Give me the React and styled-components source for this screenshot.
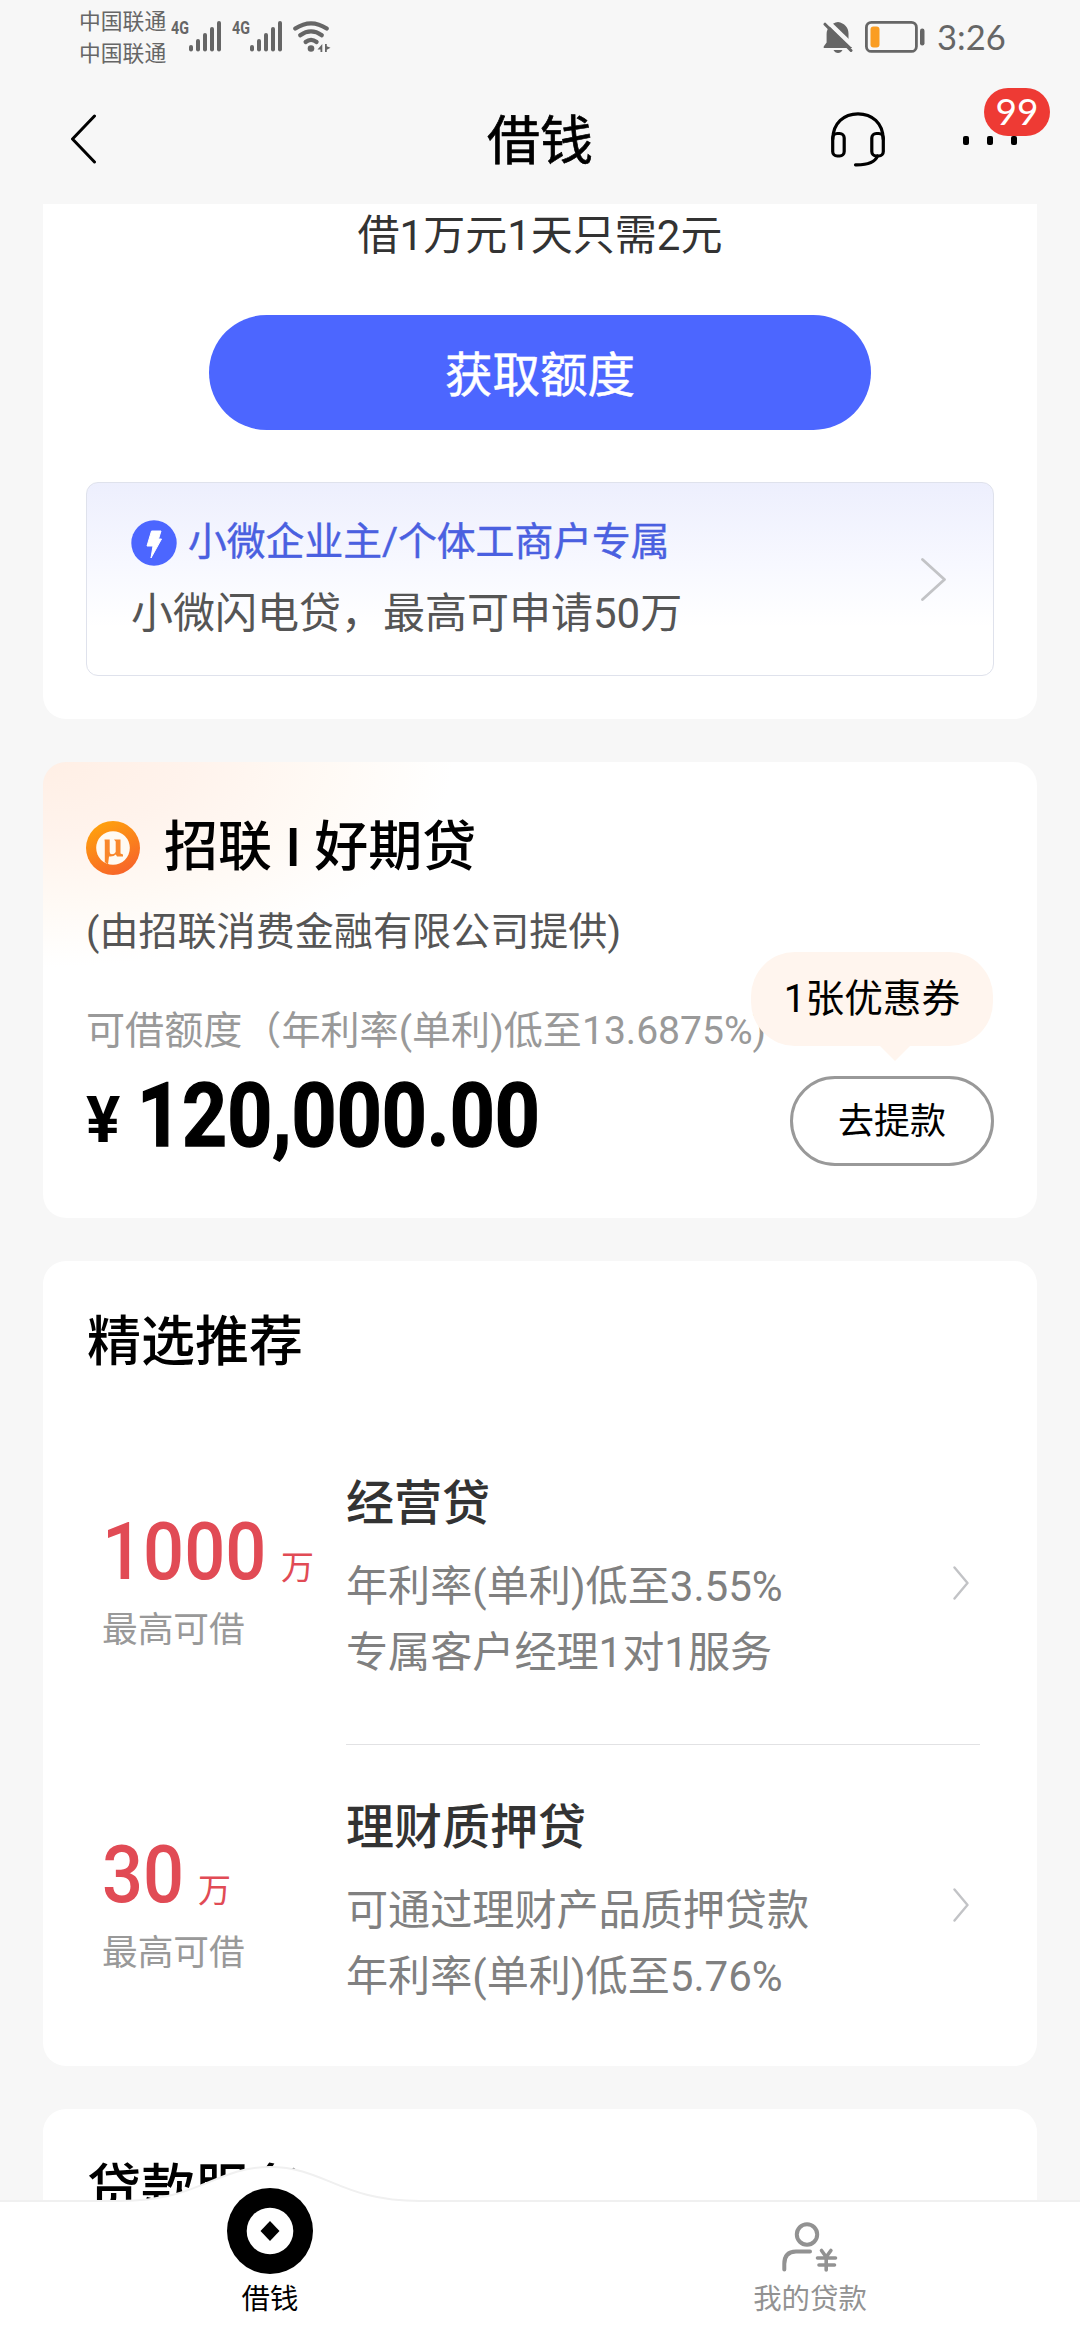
import React from 'react';
import styled, { createGlobalStyle } from 'styled-components';

const GlobalStyle = createGlobalStyle`
  * { box-sizing: border-box; }
  body {
    margin: 0;
    background: #f7f7f7;
    font-family: Roboto, "Noto Sans CJK SC", sans-serif;
    color: #000;
  }
  svg { display: block; flex: none; }
`;

const Screen = styled.div`
  width: 1080px;
  height: 2340px;
  display: flex;
  flex-direction: column;
  overflow: hidden;
  background: #f7f7f7;
`;

/* ---------- status bar ---------- */
const StatusBar = styled.header`
  height: 74px;
  padding: 6px 77px 0 79px;
  display: flex;
  justify-content: space-between;
  align-items: flex-start;
  color: #666;
`;
const StatusGroup = styled.div`
  display: flex;
  align-items: flex-start;
`;
const Carriers = styled.div`
  width: 92px;
  font-size: 21.8px;
  line-height: 32px;
  white-space: nowrap;
`;
const Signal = styled.div`
  display: flex;
  width: 61px;
  padding-top: 15px;
`;
const NetType = styled.span`
  width: 18px;
  font-size: 19px;
  font-weight: 700;
  line-height: 14px;
  display: inline-block;
  transform: scaleX(0.75);
  transform-origin: left;
`;
const WifiSlot = styled.div`
  padding-top: 14px;
`;
const RightIcons = styled.div`
  display: flex;
  align-items: center;
  padding-top: 13px;
  gap: 12px;
`;
const Clock = styled.span`
  width: 66px;
  font-family: Lato, Roboto, sans-serif;
  font-size: 34.5px;
  line-height: 36px;
  white-space: nowrap;
`;

/* ---------- navigation ---------- */
const NavBar = styled.nav`
  height: 130px;
  padding: 0 63px 0 70px;
  display: grid;
  grid-template-columns: 1fr auto 1fr;
  align-items: center;
`;
const NavTitle = styled.h1`
  margin: 0 7px 0 0;
  padding-top: 5px;
  font-size: 53px;
  line-height: 70px;
  font-weight: 400;
  -webkit-text-stroke: 0.7px currentColor;
`;
const NavActions = styled.div`
  display: flex;
  justify-content: flex-end;
  align-items: center;
  gap: 78px;
`;
const More = styled.div`
  position: relative;
  display: flex;
  gap: 18px;
  padding-top: 2px;
`;
const Dot = styled.i`
  width: 6px;
  height: 9px;
  border-radius: 2px;
  background: #000;
`;
const Badge = styled.span`
  position: absolute;
  left: 21px;
  bottom: 9px;
  width: 66px;
  height: 48px;
  border-radius: 24px;
  background: #ee3a34;
  color: #fff;
  font-family: Lato, Roboto, sans-serif;
  font-size: 37px;
  line-height: 46px;
  text-align: center;
`;

/* ---------- content ---------- */
const Content = styled.main`
  flex: 1;
  min-height: 0;
  overflow: hidden;
  padding: 0 43px;
  display: flex;
  flex-direction: column;
  gap: 43px;
`;
const Card = styled.section`
  flex: none;
  background: #fff;
  border-radius: 23px;
`;
const QuotaCard = styled(Card)`
  height: 515px;
  padding: 2px 43px 0;
  border-radius: 0 0 23px 23px;
  display: flex;
  flex-direction: column;
  align-items: center;
`;
const Slogan = styled.p`
  margin: 0;
  font-size: 42px;
  line-height: 60px;
  color: #333;
`;
const PrimaryButton = styled.button`
  margin: 49px 0 52px;
  width: 662px;
  height: 115px;
  padding: 7px 0 0;
  border: 0;
  border-radius: 58px;
  background: #4c66ff;
  color: #fff;
  font: inherit;
  font-size: 47.5px;
  line-height: 60px;
  -webkit-text-stroke: 0.5px currentColor;
`;
const Promo = styled.div`
  width: 908px;
  height: 194px;
  padding: 37px 47px 0 44px;
  border: 1px solid #dfe2ec;
  border-radius: 12px;
  background: linear-gradient(180deg, #edeffd 0%, #f7f8ff 42%, #fff 75%);
  display: flex;
  justify-content: space-between;
`;
const PromoHead = styled.div`
  display: flex;
  align-items: flex-start;
  gap: 11px;
  height: 46px;
  margin-bottom: 23px;
  color: #4a60e0;
  font-size: 38.8px;
  line-height: 44px;
  -webkit-text-stroke: 0.4px currentColor;
`;
const PromoText = styled.div`
  font-size: 42px;
  line-height: 50px;
  color: #555;
`;
const PromoArrow = styled.div`
  padding-top: 38px;
`;

const LoanCard = styled(Card)`
  height: 456px;
  padding: 56px 43px 0;
  background:
    radial-gradient(ellipse 410px 205px at 0 0, #ffefe5 0%, #fff3ec 35%, #fffaf5 70%, rgba(255, 255, 255, 0) 100%),
    #fff;
`;
const Brand = styled.div`
  display: flex;
  align-items: center;
  gap: 24px;
  height: 60px;
`;
const BrandName = styled.h2`
  margin: 0;
  font-size: 54px;
  line-height: 60px;
  font-weight: 500;
  white-space: nowrap;
`;
const Provider = styled.div`
  margin-top: 29px;
  font-size: 39.1px;
  line-height: 50px;
  color: #555;
`;
const RateLine = styled.div`
  margin-top: 49px;
  font-size: 39.1px;
  line-height: 50px;
  color: #999;
  white-space: nowrap;
`;
const AmountRow = styled.div`
  margin-top: 20px;
  height: 90px;
  display: flex;
  align-items: flex-start;
`;
const Yen = styled.span`
  width: 51px;
  font-size: 64px;
  line-height: 90px;
  font-weight: 700;
`;
const Amount = styled.span`
  flex: 1;
  font-size: 89px;
  line-height: 80px;
  font-weight: 700;
  white-space: nowrap;
  -webkit-text-stroke: 1.4px currentColor;
  transform: scaleX(0.883);
  transform-origin: left;
`;
const Withdraw = styled.div`
  position: relative;
  width: 204px;
  height: 90px;
  border: 3px solid #999;
  border-radius: 45px;
  font-size: 36px;
  line-height: 86px;
  text-align: center;
`;
const Bubble = styled.div`
  position: absolute;
  right: -2px;
  bottom: 117px;
  width: 242px;
  height: 94px;
  border-radius: 44px;
  background: #fff5ee;
  font-size: 38.7px;
  line-height: 94px;
  &::after {
    content: '';
    position: absolute;
    left: 128px;
    top: 93px;
    border: 16px solid transparent;
    border-bottom-width: 0;
    border-top-color: #fff5ee;
  }
`;

const ListCard = styled(Card)`
  padding: 47px 0 0;
`;
const SectionTitle = styled.h2`
  margin: 0 43px 42px 44px;
  font-size: 54px;
  line-height: 70px;
  font-weight: 500;
`;
const Item = styled.article`
  display: flex;
  padding: 0 57px 0 59px;
`;
const Limit = styled.div`
  width: 244px;
  padding-top: ${(p) => (p.$last ? 95 : 97)}px;
`;
const LimitValue = styled.div`
  display: flex;
  height: 70px;
  color: #e14b55;
`;
const LimitNumber = styled.span`
  width: ${(p) => p.$digits * 41.5 + 13}px;
  font-size: 79px;
  line-height: 70px;
  font-weight: 500;
  transform: scaleX(0.915);
  transform-origin: left;
`;
const LimitUnit = styled.span`
  font-size: 33px;
  line-height: 101px;
`;
const LimitLabel = styled.div`
  margin-top: 18px;
  font-size: 35.7px;
  line-height: 50px;
  color: #999;
`;
const ItemBody = styled.div`
  flex: 1;
  height: ${(p) => (p.$last ? 321 : 325)}px;
  padding: ${(p) => (p.$last ? 53 : 54)}px 11px 0 0;
  display: flex;
  justify-content: space-between;
  border-bottom: ${(p) => (p.$last ? 0 : '1px solid #e2e2e4')};
`;
const ItemTitle = styled.h3`
  margin: 0 0 20px;
  font-size: 48px;
  line-height: 60px;
  font-weight: 500;
  color: #333;
`;
const ItemLine = styled.div`
  font-size: 42.1px;
  line-height: 66px;
  color: #808080;
  white-space: nowrap;
`;
const ItemArrow = styled.div`
  padding-top: ${(p) => (p.$last ? 90 : 92)}px;
`;

/* ---------- tab bar ---------- */
const TabBar = styled.footer`
  position: relative;
  height: 140px;
  display: flex;
  background: #fff;
`;
const Hump = styled.svg`
  position: absolute;
  left: 0;
  top: -36px;
`;
const Tab = styled.div`
  position: relative;
  flex: 1;
  display: flex;
  flex-direction: column;
  align-items: center;
  justify-content: flex-end;
  gap: ${(p) => (p.$active ? 8 : 10)}px;
  padding-bottom: 22px;
  color: ${(p) => (p.$active ? '#000' : '#929292')};
  font-size: 28.4px;
  line-height: 36px;
`;

function SignalBars() {
  return (
    <svg width="32" height="31" viewBox="0 0 32 31" fill="#666">
      <rect x="0" y="24" width="4" height="6.5" rx="2" />
      <rect x="7" y="18" width="4" height="12.5" rx="2" />
      <rect x="14" y="12" width="4" height="18.5" rx="2" />
      <rect x="21" y="6" width="4" height="24.5" rx="2" />
      <rect x="28" y="0" width="4" height="30.5" rx="2" />
    </svg>
  );
}

function Wifi() {
  return (
    <svg width="38" height="32" viewBox="0 0 38 32" fill="none" stroke="#666" strokeWidth="4.2" strokeLinecap="round">
      <path d="M2.3 8.6Q18 -2 33.7 8.6" />
      <path d="M7.2 15.3Q18 7.5 28.8 15.3" />
      <path d="M12.6 22Q18 17.6 23.6 22" />
      <circle cx="18" cy="28.5" r="3.3" fill="#666" stroke="none" />
      <path d="M24.5 29.5L29.3 24v8h-1.800v-2.500zM32 24v8h1.800v-2.200l3.700-2-3.700-1.600V24z" fill="#666" stroke="none" />
    </svg>
  );
}

function BellOff() {
  return (
    <svg width="30" height="33" viewBox="0 0 30 33">
      <path d="M15 1C21.5 2 25.5 6.5 25.5 12.5V19L29 26V27H0.7V25.5L3.6 21.5V13C3.6 7 8.5 2 15 1Z" fill="#666" />
      <path d="M10.5 29H19.5Q18 32 15 32T10.5 29Z" fill="#666" />
      <path d="M4 0L30 25" stroke="#f7f7f7" strokeWidth="4.5" />
      <path d="M2 3.2L28 29.5" stroke="#666" strokeWidth="3" strokeLinecap="round" />
    </svg>
  );
}

function Battery() {
  return (
    <svg width="60" height="32" viewBox="0 0 60 32">
      <rect x="1.4" y="1.4" width="50" height="29" rx="5" fill="none" stroke="#666" strokeWidth="2.8" />
      <rect x="5.5" y="5.5" width="9" height="21" rx="3" fill="#fa9d22" />
      <rect x="55" y="7.5" width="4.5" height="17" rx="2.2" fill="#666" />
    </svg>
  );
}

function Headset() {
  return (
    <svg width="54" height="55" viewBox="0 0 54 55" fill="none" stroke="#000" strokeWidth="3.2" strokeLinecap="round">
      <path d="M1.8 27C2 11 13 1.8 27 1.8S52 11 52.2 27" />
      <rect x="1.7" y="21.5" width="11.5" height="22.5" rx="4.5" />
      <rect x="40.8" y="21.5" width="11.5" height="22.5" rx="4.5" />
      <path d="M46.5 44C44 50.5 36 53 24.5 52.8" />
    </svg>
  );
}

function Chevron({ width, height, stroke }) {
  return (
    <svg width={width} height={height} fill="none" stroke="#c2c3c6" strokeWidth={stroke} strokeLinecap="round" strokeLinejoin="round">
      <path d={`M1.5 1.5L${width - 1.5} ${height / 2}L1.5 ${height - 1.5}`} />
    </svg>
  );
}

function Bolt() {
  return (
    <svg width="46" height="46" viewBox="0 0 46 46">
      <circle cx="23" cy="23" r="22.7" fill="#4c66ff" />
      <path d="M20.5 11H30L27.5 19H30.500L20 38L22 26H16Z" fill="#fff" stroke="#fff" strokeLinejoin="round" />
    </svg>
  );
}

function BrandLogo() {
  return (
    <svg width="54" height="54" viewBox="0 0 54 54">
      <defs>
        <linearGradient id="brand" x1="0.2" y1="0" x2="0.7" y2="1">
          <stop offset="0" stopColor="#ffa40c" />
          <stop offset="1" stopColor="#f7632a" />
        </linearGradient>
      </defs>
      <circle cx="27" cy="27" r="27" fill="url(#brand)" />
      <circle cx="27" cy="27" r="16.8" fill="#fffaf2" />
      <path d="M18.5 18.5H23.7V31Q23.7 33.3 26 33.3Q28.5 33.3 29.7 31V20.5L28 18.5H34.5V32.500L37 33.5V35.5H31L29.8 33.5Q27.5 36 23 35.500L22 43.500L18.8 41V21Z" fill="#f9872b" />
    </svg>
  );
}

function Coin() {
  return (
    <svg width="86" height="86" viewBox="0 0 86 86">
      <circle cx="43" cy="43" r="43" />
      <circle cx="43" cy="43" r="23.3" fill="#fff" />
      <path d="M43 33L52.5 43L43 53L33.5 43Z" />
    </svg>
  );
}

function MyLoans() {
  return (
    <svg width="56" height="50" viewBox="0 0 56 50" fill="none" stroke="#929292" strokeWidth="4" strokeLinecap="round">
      <circle cx="25" cy="12.5" r="10.2" />
      <path d="M2.3 47.500V42Q2.3 29.500 14 29.500H28" />
      <path d="M39.5 28.500L44.2 35L48.9 28.500M44.2 35V48M35.5 36H53.5M37 43H52.5" strokeWidth="3.6" />
    </svg>
  );
}

const products = [
  { value: '1000', title: '经营贷', lines: ['年利率(单利)低至3.55%', '专属客户经理1对1服务'] },
  { value: '30', title: '理财质押贷', lines: ['可通过理财产品质押贷款', '年利率(单利)低至5.76%'] },
];

function ProductItem({ value, title, lines, last }) {
  return (
    <Item>
      <Limit $last={last}>
        <LimitValue>
          <LimitNumber $digits={value.length}>{value}</LimitNumber>
          <LimitUnit>万</LimitUnit>
        </LimitValue>
        <LimitLabel>最高可借</LimitLabel>
      </Limit>
      <ItemBody $last={last}>
        <div>
          <ItemTitle>{title}</ItemTitle>
          {lines.map((line) => (
            <ItemLine key={line}>{line}</ItemLine>
          ))}
        </div>
        <ItemArrow $last={last}>
          <Chevron width={16} height={34} stroke={2.4} />
        </ItemArrow>
      </ItemBody>
    </Item>
  );
}

export default function App() {
  return (
    <Screen>
      <GlobalStyle />
      <StatusBar>
        <StatusGroup>
          <Carriers>
            <div>中国联通</div>
            <div>中国联通</div>
          </Carriers>
          <Signal>
            <NetType>4G</NetType>
            <SignalBars />
          </Signal>
          <Signal>
            <NetType>4G</NetType>
            <SignalBars />
          </Signal>
          <WifiSlot>
            <Wifi />
          </WifiSlot>
        </StatusGroup>
        <RightIcons>
          <BellOff />
          <Battery />
          <Clock>3:26</Clock>
        </RightIcons>
      </StatusBar>

      <NavBar>
        <svg width="27" height="50" viewBox="0 0 27 50" fill="none" stroke="#000" strokeWidth="3" strokeLinecap="round" strokeLinejoin="round">
          <path d="M24.5 2L2.5 25L24.5 48" />
        </svg>
        <NavTitle>借钱</NavTitle>
        <NavActions>
          <Headset />
          <More>
            <Dot />
            <Dot />
            <Dot />
            <Badge>99</Badge>
          </More>
        </NavActions>
      </NavBar>

      <Content>
        <QuotaCard>
          <Slogan>借1万元1天只需2元</Slogan>
          <PrimaryButton>获取额度</PrimaryButton>
          <Promo>
            <div>
              <PromoHead>
                <Bolt />
                <span>小微企业主/个体工商户专属</span>
              </PromoHead>
              <PromoText>小微闪电贷，最高可申请50万</PromoText>
            </div>
            <PromoArrow>
              <Chevron width={25} height={43} stroke={2.8} />
            </PromoArrow>
          </Promo>
        </QuotaCard>

        <LoanCard>
          <Brand>
            <BrandLogo />
            <BrandName>招联 I 好期贷</BrandName>
          </Brand>
          <Provider>(由招联消费金融有限公司提供)</Provider>
          <RateLine>可借额度（年利率(单利)低至13.6875%)</RateLine>
          <AmountRow>
            <Yen>¥</Yen>
            <Amount>120,000.00</Amount>
            <Withdraw>
              去提款
              <Bubble>1张优惠券</Bubble>
            </Withdraw>
          </AmountRow>
        </LoanCard>

        <ListCard>
          <SectionTitle>精选推荐</SectionTitle>
          {products.map((p, i) => (
            <ProductItem key={p.title} {...p} last={i === products.length - 1} />
          ))}
        </ListCard>

        <ListCard>
          <SectionTitle>贷款服务</SectionTitle>
        </ListCard>
      </Content>

      <TabBar>
        <Hump width="1080" height="40" viewBox="0 0 1080 40">
          <path
            d="M0 37H120C200 37 215 3 270 3S340 37 420 37H1080V40H0Z"
            fill="#fff"
          />
          <path
            d="M0 37H120C200 37 215 3 270 3S340 37 420 37H1080"
            fill="none"
            stroke="#f0f0f0"
            strokeWidth="2"
          />
        </Hump>
        <Tab $active>
          <Coin />
          <span>借钱</span>
        </Tab>
        <Tab>
          <MyLoans />
          <span>我的贷款</span>
        </Tab>
      </TabBar>
    </Screen>
  );
}
